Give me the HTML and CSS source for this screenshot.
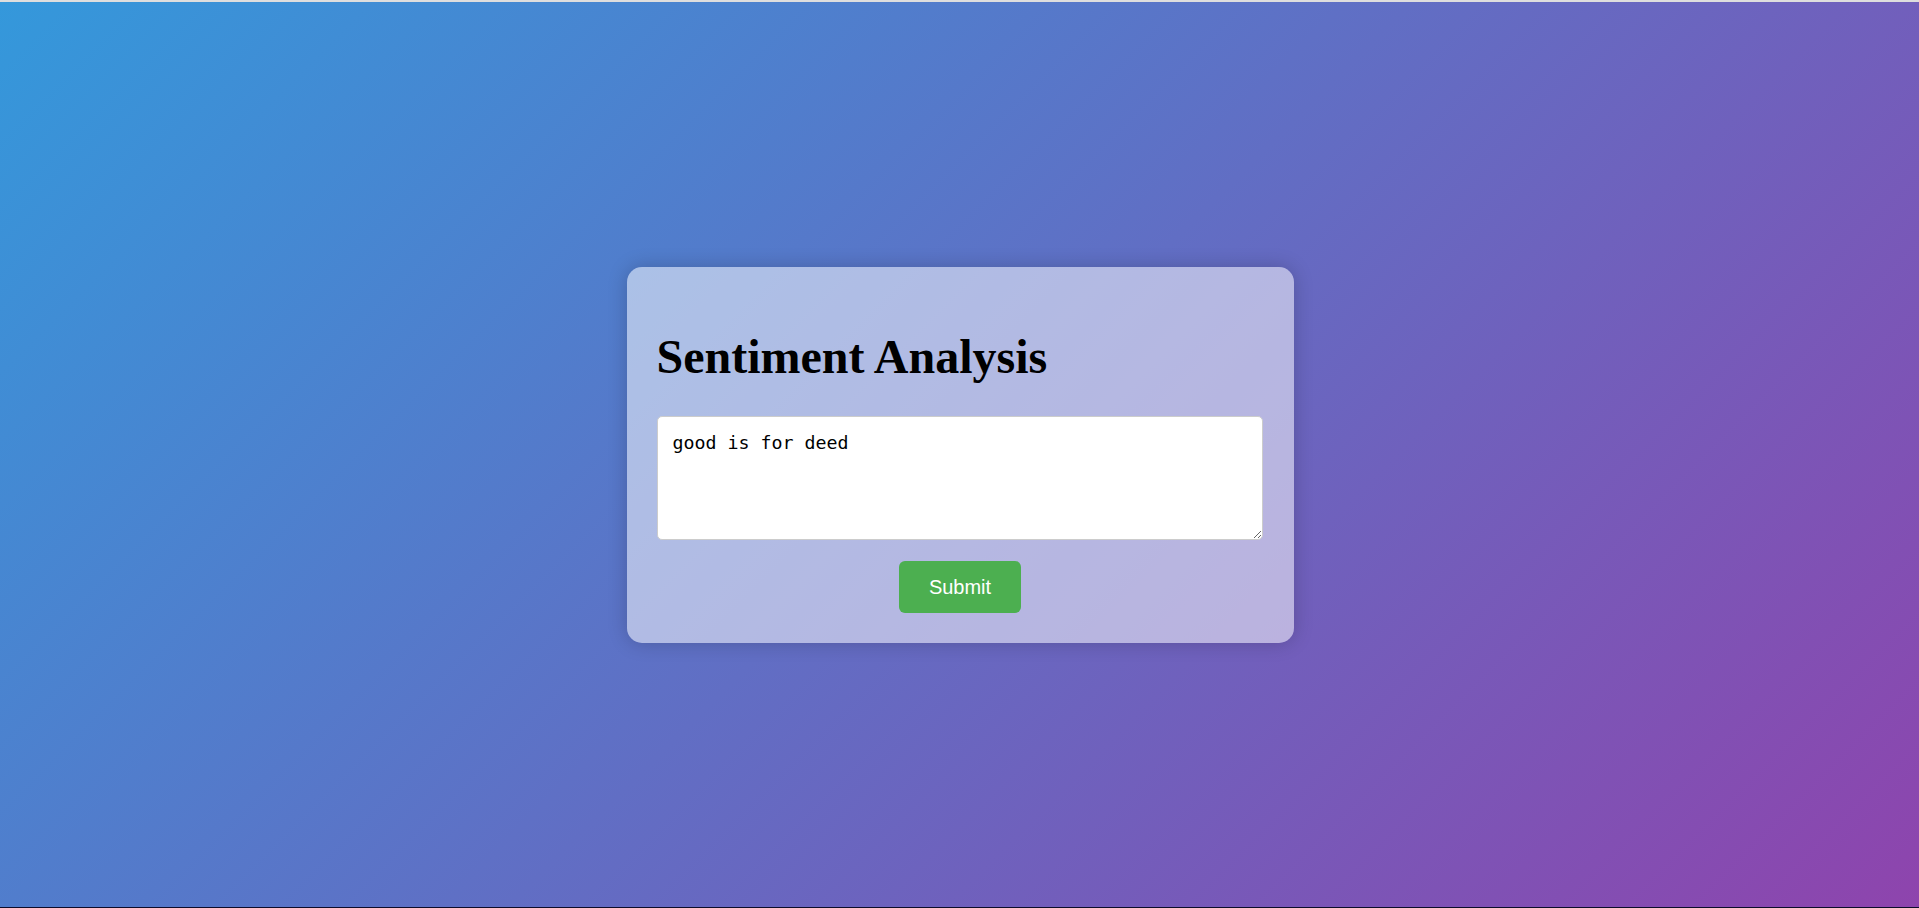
FILE: index.html
```html
<!DOCTYPE html>
<html lang="en">
<head>
<meta charset="utf-8">
<title>Sentiment Analysis</title>
<link rel="stylesheet" href="styles.css">
</head>
<body>
<main class="page">
  <form class="card">
    <h1 class="title">Sentiment Analysis</h1>
    <textarea class="input">good is for deed</textarea>
    <div class="actions">
      <button type="button" class="submit">Submit</button>
    </div>
  </form>
</main>
</body>
</html>
```

FILE: styles.css
```css
html, body {
  margin: 0;
  padding: 0;
  height: 100%;
}

body {
  background: #0c0c2a;
}

.page {
  box-sizing: border-box;
  height: 907px;
  border-top: 2px solid #dedede;
  background: linear-gradient(135deg, #3498db, #8e44ad);
  display: flex;
  align-items: center;
  justify-content: center;
  padding-left: 1px;
}

.card {
  box-sizing: border-box;
  width: 667px;
  padding: 30px;
  background: rgba(255, 255, 255, 0.52);
  border-radius: 15px;
  box-shadow: 0 0 20px rgba(0, 0, 0, 0.2);
}

.title {
  font-family: "Liberation Serif", "Times New Roman", serif;
  font-size: 48px;
  font-weight: bold;
  margin: 32px 0;
  color: #000;
}

.input {
  display: block;
  box-sizing: border-box;
  width: 606px;
  height: 124px;
  padding: 15px 15px 13px;
  border: 1px solid #ccc;
  border-radius: 5px;
  background: #fff;
  font-family: "DejaVu Sans Mono", monospace;
  font-size: 18.3px;
  color: #000;
  margin: 0 0 21px;
}

.actions {
  text-align: center;
}

.submit {
  background: #4caf50;
  color: #fff;
  border: none;
  border-radius: 6px;
  padding: 14px 30px;
  font-family: "Liberation Sans", Arial, sans-serif;
  font-size: 20px;
  line-height: 24px;
  cursor: pointer;
}
```
